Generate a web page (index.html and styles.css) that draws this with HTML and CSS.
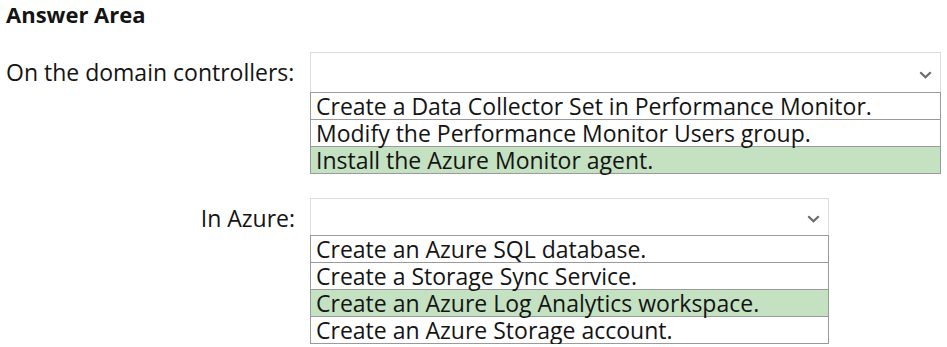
FILE: index.html
```html
<!DOCTYPE html>
<html>
<head>
<meta charset="utf-8">
<link rel="stylesheet" href="styles.css">
</head>
<body>
<div class="page">
  <h1 class="title">Answer Area</h1>
  <div class="grid">
    <div class="label">On the domain controllers:</div>
    <div class="dropdown wide">
      <div class="select">
        <svg class="chev" width="13" height="8" viewBox="0 0 13 8"><path d="M1.3 1.3 L6.5 6.3 L11.7 1.3" fill="none" stroke="#6b6b6b" stroke-width="2.2"/></svg>
      </div>
      <div class="list">
        <div class="opt">Create a Data Collector Set in Performance Monitor.</div>
        <div class="opt">Modify the Performance Monitor Users group.</div>
        <div class="opt sel">Install the Azure Monitor agent.</div>
      </div>
    </div>
    <div class="label">In Azure:</div>
    <div class="dropdown narrow">
      <div class="select short">
        <svg class="chev" width="13" height="8" viewBox="0 0 13 8"><path d="M1.3 1.3 L6.5 6.3 L11.7 1.3" fill="none" stroke="#6b6b6b" stroke-width="2.2"/></svg>
      </div>
      <div class="list">
        <div class="opt">Create an Azure SQL database.</div>
        <div class="opt">Create a Storage Sync Service.</div>
        <div class="opt sel">Create an Azure Log Analytics workspace.</div>
        <div class="opt">Create an Azure Storage account.</div>
      </div>
    </div>
  </div>
</div>
</body>
</html>
```
FILE: styles.css
```css
html, body {
  margin: 0;
  padding: 0;
  background: #fff;
}
.page {
  padding: 0 0 0 6px;
  font-family: "Open Sans", "Noto Sans", sans-serif;
  color: #141414;
}
.title {
  margin: 0;
  font-size: 22px;
  font-weight: 700;
  line-height: 30px;
  letter-spacing: 0;
  position: relative;
  top: -1px;
}
.grid {
  margin-top: 22px;
  display: grid;
  grid-template-columns: 289px auto;
  column-gap: 15px;
  row-gap: 24px;
  align-items: start;
}
.label {
  font-size: 23px;
  line-height: 40px;
  text-align: right;
  white-space: nowrap;
}
.label:first-child {
  text-align: left;
}
.dropdown.wide { width: 631px; }
.dropdown.narrow { width: 519px; }
.select {
  height: 40px;
  box-sizing: border-box;
  border: 1px solid #dcdcdc;
  border-bottom: none;
  display: flex;
  align-items: center;
  justify-content: flex-end;
  padding-right: 8px;
}
.select.short { height: 37px; }
.chev { display: block; margin-top: 4px; }
.list {
  border: 1px solid #9a9a9a;
}
.opt {
  font-size: 23px;
  line-height: 26px;
  padding: 0 5px;
  white-space: nowrap;
  border-top: 1px solid #9a9a9a;
}
.opt:first-child { border-top: none; }
.opt.sel { background: #c4e1c2; }
```
